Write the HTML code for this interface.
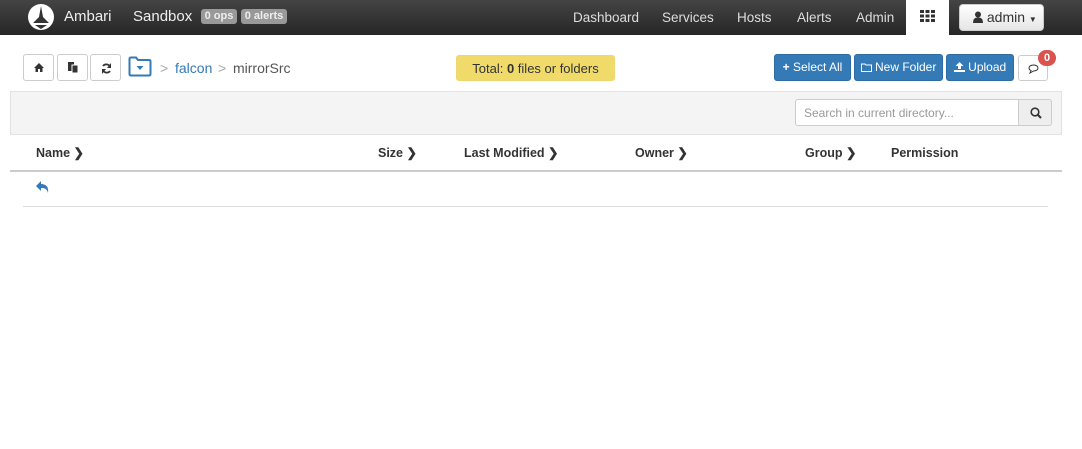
<!DOCTYPE html>
<html><head><style>
*{box-sizing:border-box;margin:0;padding:0}
body{width:1082px;height:449px;background:#fff;font-family:"Liberation Sans",sans-serif;position:relative;overflow:hidden;font-size:13px;color:#333}
.nav{position:absolute;left:0;top:0;width:1082px;height:35px;background:linear-gradient(#444,#262626)}
.abs{position:absolute}
.nv{position:absolute;top:10px;color:#ddd;font-size:13.5px}
.btn{position:absolute;border:1px solid #ccc;border-radius:3px;background:#fff}
.blue{position:absolute;top:54px;height:27px;background:#337ab7;border:1px solid #2e6da4;border-radius:3px;color:#fff;font-size:12px;line-height:25px;text-align:center}
.th{position:absolute;top:145px;height:16px;line-height:16px;font-weight:bold;font-size:12.5px;color:#333}
</style></head><body>
<div class="nav">
 <svg class="abs" style="left:27px;top:3px" width="28" height="28" viewBox="0 0 28 28"><circle cx="14" cy="14" r="13" fill="#fff"/><path d="M14 3 L16 14 L22 20 L6 20 L12 14 Z" fill="#333"/><path d="M8 22 L20 22 L14 26Z" fill="#333"/></svg>
 <div class="nv" style="left:64px;top:8px;font-size:15px;color:#eee">Ambari</div>
 <div class="nv" style="left:133px;top:8px;font-size:15px;color:#eee">Sandbox</div>
 <div class="abs" style="left:196px;top:12px;width:0;height:0;border:5px solid transparent;border-right-color:#999"></div>
 <div class="abs" style="left:201px;top:9px;width:36px;height:15px;background:#999;border-radius:3px;color:#eee;font-size:11px;font-weight:bold;text-align:center;line-height:15px">0 ops</div>
 <div class="abs" style="left:241px;top:9px;width:46px;height:15px;background:#999;border-radius:3px;color:#eee;font-size:11px;font-weight:bold;text-align:center;line-height:15px">0 alerts</div>
 <div class="nv" style="left:573px">Dashboard</div>
 <div class="nv" style="left:662px">Services</div>
 <div class="nv" style="left:737px">Hosts</div>
 <div class="nv" style="left:797px">Alerts</div>
 <div class="nv" style="left:856px">Admin</div>
 <div class="abs" style="left:906px;top:0;width:43px;height:35px;background:#fff">
  <svg class="abs" style="left:14px;top:10px" width="15" height="12"><g fill="#333"><rect x="0" y="0" width="4" height="3"/><rect x="5.5" y="0" width="4" height="3"/><rect x="11" y="0" width="4" height="3"/><rect x="0" y="4.5" width="4" height="3"/><rect x="5.5" y="4.5" width="4" height="3"/><rect x="11" y="4.5" width="4" height="3"/><rect x="0" y="9" width="4" height="3"/><rect x="5.5" y="9" width="4" height="3"/><rect x="11" y="9" width="4" height="3"/></g></svg>
 </div>
 <div class="abs" style="left:959px;top:4px;width:85px;height:27px;background:linear-gradient(#fff,#e6e6e6);border:1px solid #ccc;border-radius:4px;font-size:14px;line-height:25px;color:#333;padding-left:13px">
  <svg style="vertical-align:-1px" width="10" height="12"><circle cx="5" cy="3.5" r="3" fill="#333"/><path d="M0 12 Q0 6 5 6.5 Q10 6 10 12Z" fill="#333"/></svg> admin <span style="font-size:8px">▼</span></div>
</div>

<div class="btn" style="left:23px;top:54px;width:31px;height:27px"><svg class="abs" style="left:10px;top:8px" width="10" height="9"><path d="M5 0 L10 5 L8.5 5 L8.5 9 L6 9 L6 6 L4 6 L4 9 L1.5 9 L1.5 5 L0 5Z" fill="#333"/></svg></div>
<div class="btn" style="left:57px;top:54px;width:31px;height:27px"><svg class="abs" style="left:10px;top:7px" width="11" height="12"><rect x="0" y="0" width="6" height="9" fill="#333"/><rect x="4" y="3" width="6" height="8" fill="#333" stroke="#fff" stroke-width="1"/></svg></div>
<div class="btn" style="left:90px;top:54px;width:31px;height:27px"><svg class="abs" style="left:10px;top:8px" width="11" height="11" viewBox="0 0 11 11"><path d="M9 4 A4 4 0 0 0 2 3" stroke="#333" stroke-width="1.8" fill="none"/><path d="M2 7 A4 4 0 0 0 9 8" stroke="#333" stroke-width="1.8" fill="none"/><path d="M10 0 L10 5 L6 5Z M1 11 L1 6 L5 6Z" fill="#333"/></svg></div>
<svg class="abs" style="left:128px;top:56px" width="24" height="21" viewBox="0 0 24 21"><path d="M1.5 3 Q1.5 1.5 3 1.5 L8 1.5 L10 4 L21 4 Q22.5 4 22.5 5.5 L22.5 18 Q22.5 19.5 21 19.5 L3 19.5 Q1.5 19.5 1.5 18Z" fill="none" stroke="#337ab7" stroke-width="2"/><path d="M8.5 10 L15.5 10 L12 14Z" fill="#337ab7"/></svg>
<div class="abs" style="left:160px;top:60px;color:#aaa;font-size:14px">&gt;</div>
<div class="abs" style="left:175px;top:60px;color:#337ab7;font-size:14px">falcon</div>
<div class="abs" style="left:218px;top:60px;color:#aaa;font-size:14px">&gt;</div>
<div class="abs" style="left:233px;top:60px;color:#555;font-size:14px">mirrorSrc</div>

<div class="abs" style="left:456px;top:55px;width:159px;height:26px;background:#f0db6a;border:1px solid #ecd770;border-radius:3px;text-align:center;line-height:26px;font-size:13px;color:#333">Total: <b>0</b> files or folders</div>

<div class="blue" style="left:774px;width:77px"><b>+</b> Select All</div>
<div class="blue" style="left:854px;width:89px"><svg width="11" height="9" style="vertical-align:-1px"><path d="M0.5 1 L4 1 L5 2 L10.5 2 L10.5 8.5 L0.5 8.5Z" fill="none" stroke="#fff"/></svg> New Folder</div>
<div class="blue" style="left:946px;width:68px"><svg width="11" height="10" style="vertical-align:-1px"><path d="M5.5 0 L9.5 4 L7 4 L7 7 L4 7 L4 4 L1.5 4Z M0 8 L11 8 L11 10 L0 10Z" fill="#fff"/></svg> Upload</div>
<div class="btn" style="left:1018px;top:55px;width:30px;height:26px"><svg class="abs" style="left:9px;top:8px" width="11" height="10"><path d="M5.5 1 C8.5 1 10 2.5 10 4 C10 5.8 8 7 5.5 7 L2 9 L3 6.5 C1.5 6 1 5 1 4 C1 2.5 2.5 1 5.5 1Z" fill="none" stroke="#333"/></svg></div>
<div class="abs" style="left:1038px;top:50px;width:18px;height:16px;background:#d9534f;border-radius:8px;color:#fff;font-size:11px;font-weight:bold;text-align:center;line-height:16px">0</div>

<div class="abs" style="left:10px;top:91px;width:1052px;height:44px;background:#f4f4f4;border:1px solid #e2e2e2"></div>
<div class="abs" style="left:795px;top:99px;width:224px;height:27px;background:#fff;border:1px solid #ccc;border-radius:3px 0 0 3px;font-size:12px;color:#999;padding:6px 8px">Search in current directory...</div>
<div class="abs" style="left:1018px;top:99px;width:34px;height:27px;background:#eee;border:1px solid #ccc;border-radius:0 3px 3px 0"><svg class="abs" style="left:11px;top:7px" width="12" height="12"><circle cx="5" cy="5" r="3.8" fill="none" stroke="#333" stroke-width="1.6"/><path d="M8 8 L11 11" stroke="#333" stroke-width="2"/></svg></div>

<div class="th" style="left:36px">Name ❯</div>
<div class="th" style="left:378px">Size ❯</div>
<div class="th" style="left:464px">Last Modified ❯</div>
<div class="th" style="left:635px">Owner ❯</div>
<div class="th" style="left:805px">Group ❯</div>
<div class="th" style="left:891px">Permission</div>
<div class="abs" style="left:10px;top:170px;width:1052px;height:2px;background:#ccc"></div>
<svg class="abs" style="left:36px;top:181px" width="13" height="12" viewBox="0 0 13 12"><path d="M0 5 L5 0 L5 3 C10 3 13 6 12 12 C11 8 9 7 5 7 L5 10Z" fill="#337ab7"/></svg>
<div class="abs" style="left:23px;top:206px;width:1025px;height:1px;background:#ddd"></div>
</body></html>
